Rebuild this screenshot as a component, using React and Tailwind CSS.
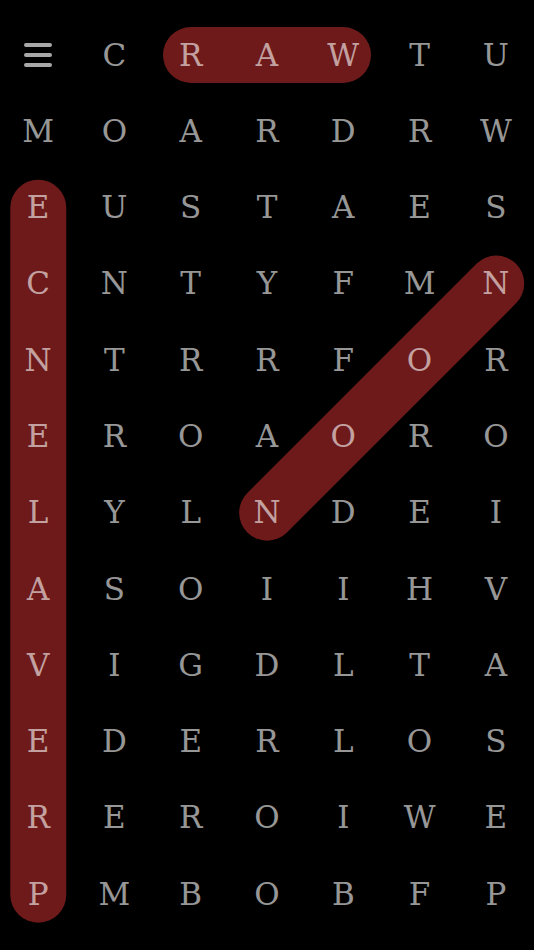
import React from "react";

const ROWS = [
  "_CRAWTU",
  "MOARDRW",
  "EUSTAES",
  "CNTYFMN",
  "NTRRFOR",
  "EROAORO",
  "LYLNDEI",
  "ASOIIHV",
  "VIGDLTA",
  "EDERLOS",
  "REROIWE",
  "PMBOBFP",
];

const CELL = 534 / 7;
const TOP = 17;
const R = 28;

// found words: [startCol, startRow, endCol, endRow]
const FOUND = [
  [2, 0, 4, 0],
  [0, 2, 0, 11],
  [6, 3, 3, 6],
];

function center(c, r) {
  return [c * CELL + CELL / 2, TOP + r * CELL + CELL / 2];
}

function Pill({ word }) {
  const [x1, y1] = center(word[0], word[1]);
  const [x2, y2] = center(word[2], word[3]);
  const len = Math.hypot(x2 - x1, y2 - y1) + R * 2;
  const angle = (Math.atan2(y2 - y1, x2 - x1) * 180) / Math.PI;
  return (
    <div
      className="absolute h-[56px] rounded-full bg-[#6e1a1a]"
      style={{
        width: len,
        left: (x1 + x2) / 2 - len / 2,
        top: (y1 + y2) / 2 - R,
        transform: `rotate(${angle}deg)`,
      }}
    />
  );
}

function MenuIcon() {
  return (
    <div className="flex flex-col gap-[6px]">
      <span className="block w-[28px] h-[4px] rounded-sm bg-[#a8a8a8]" />
      <span className="block w-[28px] h-[4px] rounded-sm bg-[#a8a8a8]" />
      <span className="block w-[28px] h-[4px] rounded-sm bg-[#a8a8a8]" />
    </div>
  );
}

export default function App() {
  return (
    <div className="relative h-[950px] w-full bg-black pt-[17px] overflow-hidden">
      {FOUND.map((w, i) => (
        <Pill key={i} word={w} />
      ))}
      <div className="relative grid grid-cols-7 auto-rows-[76.286px]">
        {ROWS.map((row, r) =>
          row.split("").map((ch, c) => (
            <div
              key={r + "-" + c}
              className="flex items-center justify-center text-[31px] leading-none text-white/60"
              style={{ fontFamily: '"DejaVu Serif", serif' }}
            >
              {ch === "_" ? <MenuIcon /> : ch}
            </div>
          ))
        )}
      </div>
    </div>
  );
}
